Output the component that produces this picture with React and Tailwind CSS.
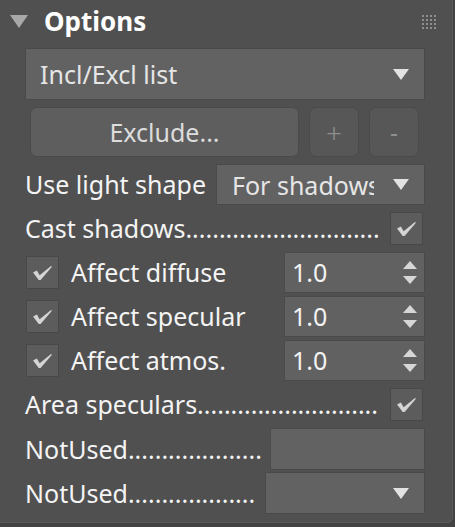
import React from 'react';

const font = "font-['Noto_Sans','Open_Sans',sans-serif]";

function Tri({ className = '' }) {
  return (
    <svg width="16" height="11" viewBox="0 0 16 11" className={className}>
      <path d="M0 0 L16 0 L8 11 Z" fill="#e2e2e2" />
    </svg>
  );
}

function Check({ className = '' }) {
  return (
    <div className={`w-[33px] h-[33px] shrink-0 bg-[#5c5c5c] border border-[#484848] flex items-center justify-center ${className}`}>
      <svg width="21" height="17" viewBox="0 0 22 18">
        <path d="M1 9 L5 7 L8 12 L20 2 L21 3 L9 17 L7 17 Z" fill="#d4d4d4" />
      </svg>
    </div>
  );
}

function Spinner({ value }) {
  return (
    <div className="w-[141px] h-[41px] bg-[#616161] border border-[#4a4a4a] flex items-center justify-between pl-[7px] pr-[7px]">
      <span className="text-[25px] leading-none text-[#f2f2f2]">{value}</span>
      <svg width="14" height="24" viewBox="0 0 14 24">
        <path d="M7 0 L14 8 L0 8 Z" fill="#d6d6d6" />
        <path d="M0 15 L14 15 L7 23 Z" fill="#d6d6d6" />
      </svg>
    </div>
  );
}

function Leader({ label, dots, children }) {
  return (
    <div className="flex items-center justify-between">
      <span className="text-[25px] leading-none text-[#f4f4f4] whitespace-nowrap">
        {label}
        {'.'.repeat(dots)}
      </span>
      {children}
    </div>
  );
}

function AffectRow({ label }) {
  return (
    <div className="flex items-center h-[41px] pl-[1px]">
      <Check />
      <span className="ml-[12px] flex-1 text-[25px] leading-none text-[#f4f4f4] whitespace-nowrap">{label}</span>
      <Spinner value="1.0" />
    </div>
  );
}

export default function App() {
  return (
    <div className={`w-[455px] h-[527px] bg-[#434343] ${font}`}>
      <div className="w-[453px] h-[523px] bg-[#505050] rounded-br-[6px] border-r border-b border-[#5a5a5a]">
        <div className="flex items-center h-[44px] relative">
          <svg width="18" height="13" viewBox="0 0 18 13" className="ml-[10px] mt-[-2px]">
            <path d="M0 0 L18 0 L9 13 Z" fill="#a8a8a8" />
          </svg>
          <span className="ml-[16px] text-[26px] font-bold text-white leading-none mb-[3px]">Options</span>
          <div className="absolute left-[422px] top-[15px] grid grid-cols-4 gap-[2px]">
            {Array.from({ length: 16 }).map((_, i) => (
              <div key={i} className="w-[2px] h-[2px] bg-[#8e8e8e]" />
            ))}
          </div>
        </div>

        <div className="pl-[25px] w-[425px]">
          <div className="mt-[4px] h-[52px] bg-[#626262] border border-[#4a4a4a] flex items-center justify-between pl-[14px] pr-[15px]">
            <span className="text-[25px] leading-none text-[#e6e6e6]">Incl/Excl list</span>
            <Tri />
          </div>

          <div className="mt-[7px] flex h-[50px] pl-[5px] gap-[10px]">
            <div className="w-[269px] rounded-[7px] bg-[#5e5e5e] border border-[#4b4b4b] flex items-center justify-center">
              <span className="text-[25px] leading-none text-[#dcdcdc]">Exclude...</span>
            </div>
            <div className="w-[50px] rounded-[7px] bg-[#575757] border border-[#4b4b4b] flex items-center justify-center">
              <span className="text-[28px] leading-none text-[#8f8f8f] font-light">+</span>
            </div>
            <div className="w-[50px] rounded-[7px] bg-[#575757] border border-[#4b4b4b] flex items-center justify-center">
              <span className="text-[25px] leading-none text-[#8f8f8f]">-</span>
            </div>
          </div>

          <div className="mt-[7px] flex items-center h-[41px]">
            <span className="text-[25px] leading-none text-[#f4f4f4] whitespace-nowrap w-[191px]">Use light shape</span>
            <div className="flex-1 h-[41px] bg-[#626262] border border-[#4a4a4a] flex items-center pl-[15px] pr-[15px]">
              <span className="w-[142px] overflow-hidden text-[25px] leading-[30px] text-[#e6e6e6] whitespace-nowrap">For shadows</span>
              <Tri className="ml-auto shrink-0" />
            </div>
          </div>

          <div className="mt-[7px] h-[33px]">
            <Leader label="Cast shadows" dots={29}>
              <Check className="mr-[2px]" />
            </Leader>
          </div>

          <div className="mt-[7px] flex flex-col gap-[3px]">
            <AffectRow label="Affect diffuse" />
            <AffectRow label="Affect specular" />
            <AffectRow label="Affect atmos." />
          </div>

          <div className="mt-[7px] h-[33px]">
            <Leader label="Area speculars" dots={27}>
              <Check className="mr-[2px]" />
            </Leader>
          </div>

          <div className="mt-[7px]">
            <Leader label="NotUsed" dots={20}>
              <div className="w-[155px] h-[42px] bg-[#626262] border border-[#4a4a4a]" />
            </Leader>
          </div>

          <div className="mt-[2px]">
            <Leader label="NotUsed" dots={19}>
              <div className="w-[160px] h-[42px] bg-[#626262] border border-[#4a4a4a] flex items-center justify-end pr-[15px]">
                <Tri />
              </div>
            </Leader>
          </div>
        </div>
      </div>
    </div>
  );
}
